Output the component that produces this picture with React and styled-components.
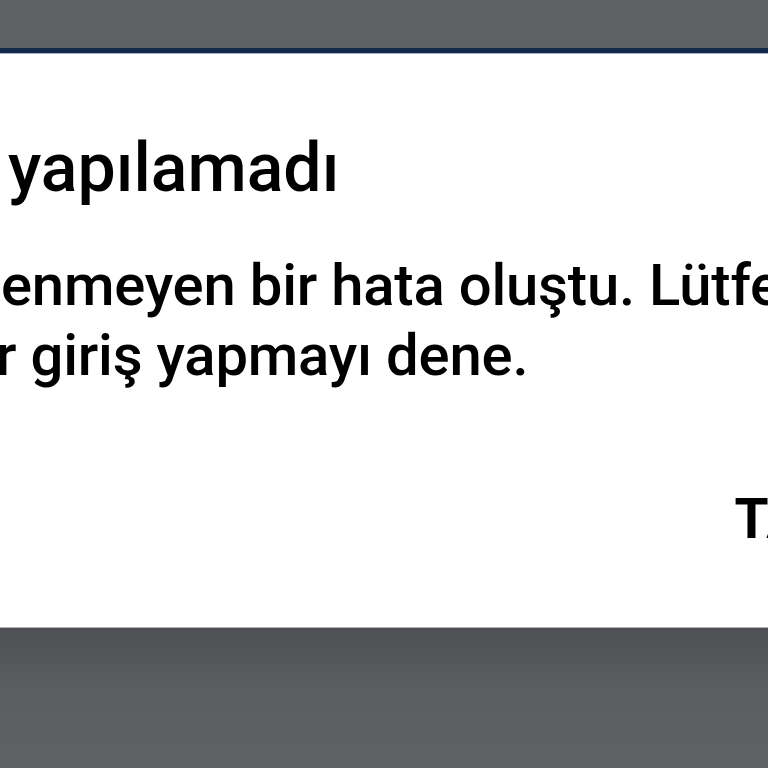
import React from "react";
import styled, { createGlobalStyle } from "styled-components";

const Global = createGlobalStyle`
  html, body { margin: 0; padding: 0; background: #5e6064; overflow: hidden; }
  #root { width: 768px; height: 768px; overflow: hidden; }
`;

const Screen = styled.div`
  width: 768px;
  height: 768px;
  display: flex;
  flex-direction: column;
  overflow: hidden;
  font-family: Roboto, "Noto Sans", sans-serif;
  color: #000;
`;

const TopBand = styled.div`
  height: 48px;
  flex: none;
  background: #5f6165;
`;

const Dialog = styled.div`
  flex: none;
  width: 1000px;
  height: 579px;
  box-sizing: border-box;
  background: #fff;
  border-top: 5px solid #13294b;
  box-shadow: inset 0 1px 0 #9fb4d0;
  display: flex;
  flex-direction: column;
  padding: 75px 61px 0 0;
`;

const Title = styled.h1`
  margin: 0;
  padding-left: 8px;
  font-size: 68px;
  line-height: 80px;
  font-weight: 500;
  white-space: nowrap;
  letter-spacing: 0;
`;

const Message = styled.p`
  margin: 42px 0 0;
  font-size: 58px;
  line-height: 70px;
  font-weight: 500;
  white-space: nowrap;
  letter-spacing: -0.2px;
`;

const Line = styled.span`
  display: block;
  margin-left: ${(p) => p.$indent}px;
`;

const Footer = styled.div`
  margin-top: 97px;
  display: flex;
  justify-content: flex-end;
`;

const TextButton = styled.button`
  border: none;
  background: transparent;
  padding: 0;
  font-family: inherit;
  font-size: 55px;
  line-height: 64px;
  font-weight: 700;
  color: #000;
  letter-spacing: 0.5px;
`;

const BottomBand = styled.div`
  flex: 1;
  border-top: 1px solid #b5b6b8;
  background: linear-gradient(#4e5053, #5b5e61 45%, #5f6164);
`;

export default function App() {
  return (
    <>
      <Global />
      <Screen>
        <TopBand />
        <Dialog>
          <Title>yapılamadı</Title>
          <Message>
            <Line $indent={1}>enmeyen bir hata oluştu. Lütfen</Line>
            <Line $indent={-4}>r giriş yapmayı dene.</Line>
          </Message>
          <Footer>
            <TextButton>TAMAM</TextButton>
          </Footer>
        </Dialog>
        <BottomBand />
      </Screen>
    </>
  );
}
